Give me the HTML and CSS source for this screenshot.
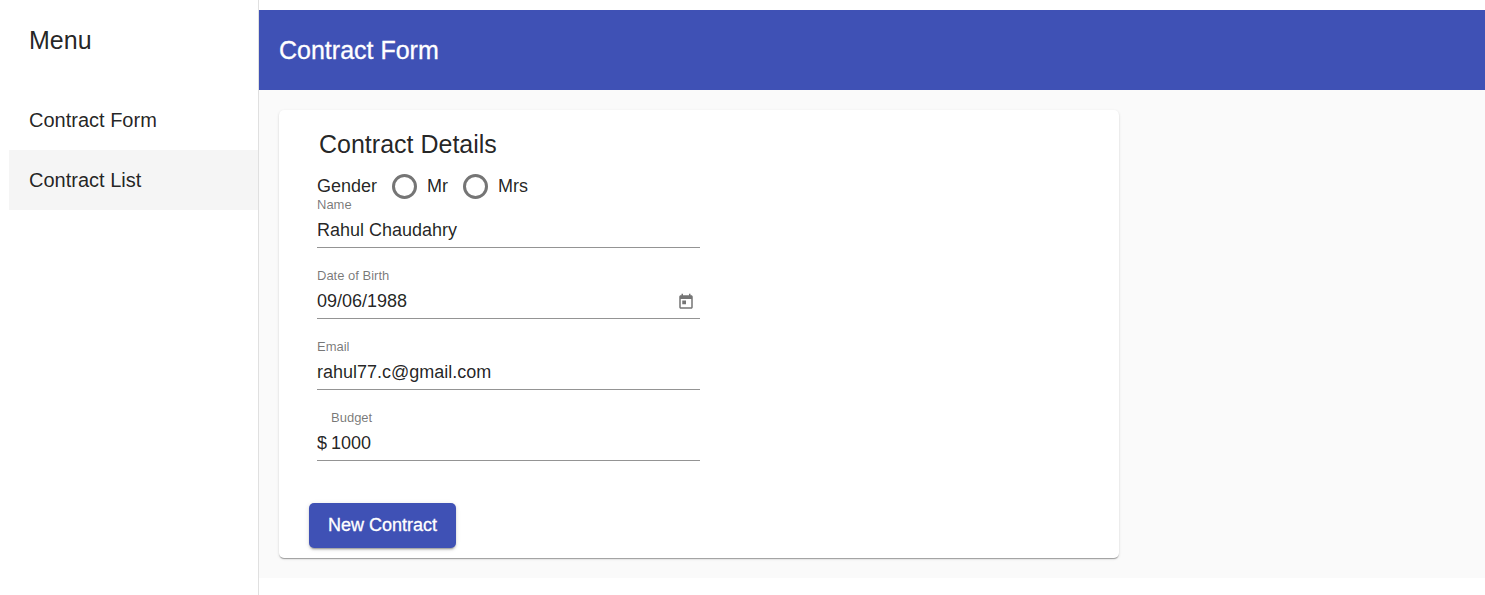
FILE: index.html
```html
<!DOCTYPE html>
<html lang="en">
<head>
<meta charset="utf-8">
<meta name="viewport" content="width=device-width, initial-scale=1">
<title>Contract Form</title>
<link rel="stylesheet" href="styles.css">
</head>
<body>
<div class="layout">
  <aside class="sidenav">
    <h2 class="menu-title">Menu</h2>
    <nav class="nav">
      <a class="nav-item" href="#form">Contract Form</a>
      <a class="nav-item hovered" href="#list">Contract List</a>
    </nav>
  </aside>
  <main class="content">
    <header class="toolbar"><h1 class="toolbar-title">Contract Form</h1></header>
    <div class="page">
      <form class="card">
        <h2 class="card-title">Contract Details</h2>
        <div class="fields">
          <div class="gender" role="radiogroup" aria-labelledby="gender-label">
            <span id="gender-label">Gender</span>
            <label class="option"><input class="radio" type="radio" name="gender" value="mr">Mr</label>
            <label class="option"><input class="radio" type="radio" name="gender" value="mrs">Mrs</label>
          </div>
          <div class="field">
            <label class="label" for="name">Name</label>
            <div class="control"><input class="input" id="name" type="text" value="Rahul Chaudahry"></div>
          </div>
          <div class="field">
            <label class="label" for="dob">Date of Birth</label>
            <div class="control">
              <input class="input" id="dob" type="text" value="09/06/1988">
              <button class="calendar" type="button" aria-label="Open calendar">
                <svg viewBox="0 0 24 24" width="18" height="18" fill="currentColor"><path d="M19 3h-1V1h-2v2H8V1H6v2H5c-1.11 0-1.99.9-1.99 2L3 19c0 1.1.89 2 2 2h14c1.1 0 2-.9 2-2V5c0-1.1-.9-2-2-2zm0 16H5V8h14v11zM7 10h5v5H7z"/></svg>
              </button>
            </div>
          </div>
          <div class="field">
            <label class="label" for="email">Email</label>
            <div class="control"><input class="input" id="email" type="email" value="rahul77.c@gmail.com"></div>
          </div>
          <div class="field">
            <label class="label indented" for="budget">Budget</label>
            <div class="control"><span class="prefix">$</span><input class="input" id="budget" type="text" value="1000"></div>
          </div>
        </div>
        <button class="submit" type="button">New Contract</button>
      </form>
    </div>
  </main>
</div>
</body>
</html>
```
FILE: styles.css
```css
* { box-sizing: border-box; }
body {
  margin: 0;
  background: #fff;
  color: rgba(0, 0, 0, 0.87);
  font-family: "Liberation Sans", Arial, sans-serif;
}
.layout { display: flex; min-height: 100vh; }
.sidenav {
  flex: 0 0 259px;
  padding: 10px 0 0 9px;
  border-right: 1px solid #e0e0e0;
}
.menu-title, .toolbar-title, .card-title { margin: 0; font-weight: 400; }
.menu-title { padding: 0 20px; font-size: 25px; line-height: 60px; }
.nav { display: flex; flex-direction: column; padding-top: 20px; }
.nav-item {
  padding: 0 20px;
  color: inherit;
  font-size: 20px;
  line-height: 60px;
  text-decoration: none;
}
.hovered { background: #f5f5f5; }
.content { flex: 1; padding-top: 10px; }
.toolbar {
  padding: 0 20px;
  background: #3f51b5;
  color: #fff;
  line-height: 80px;
}
.toolbar-title { font-size: 25px; -webkit-text-stroke: 0.3px currentColor; }
.page { padding: 20px; background: #fafafa; }
.card {
  max-width: 840px;
  padding: 20px 30px 10px;
  border-radius: 5px;
  background: #fff;
  box-shadow: 0 2px 1px -1px rgba(0,0,0,.2), 0 1px 1px rgba(0,0,0,.14), 0 1px 3px rgba(0,0,0,.12);
}
.card-title { padding-left: 10px; font-size: 25px; line-height: 28px; }
.fields { max-width: 391px; padding: 16px 0 0 8px; }
.gender { display: flex; align-items: center; height: 25px; font-size: 18px; gap: 15px; }
.option { display: flex; align-items: center; gap: 10px; }
.radio {
  width: 25px;
  height: 25px;
  margin: 0;
  appearance: none;
  border: 3px solid #757575;
  border-radius: 50%;
}
.radio:checked { background: radial-gradient(#3f51b5 45%, transparent 50%); }
.field { padding-bottom: 22px; }
.label { display: block; color: rgba(0, 0, 0, 0.54); font-size: 13px; line-height: 12px; }
.indented { padding-left: 14px; }
.control { display: flex; align-items: center; height: 37px; border-bottom: 1px solid #949494; font-size: 18px; }
.input {
  flex: 1;
  min-width: 0;
  height: 36px;
  padding: 2px 0 0;
  border: 0;
  outline: 0;
  background: transparent;
  color: inherit;
  font: inherit;
}
.prefix { width: 14px; padding-top: 2px; }
.calendar { display: flex; margin: 0; padding: 4px 5px 0; border: 0; background: none; color: #757575; }
.submit {
  display: block;
  height: 45px;
  margin-top: 20px;
  padding: 0 19px;
  border: 0;
  border-radius: 5px;
  background: #3f51b5;
  color: #fff;
  font: 18px "Liberation Sans", Arial, sans-serif;
  -webkit-text-stroke: 0.3px currentColor;
  box-shadow: 0 3px 1px -2px rgba(0,0,0,.2), 0 2px 2px rgba(0,0,0,.14), 0 1px 5px rgba(0,0,0,.12);
}
```
